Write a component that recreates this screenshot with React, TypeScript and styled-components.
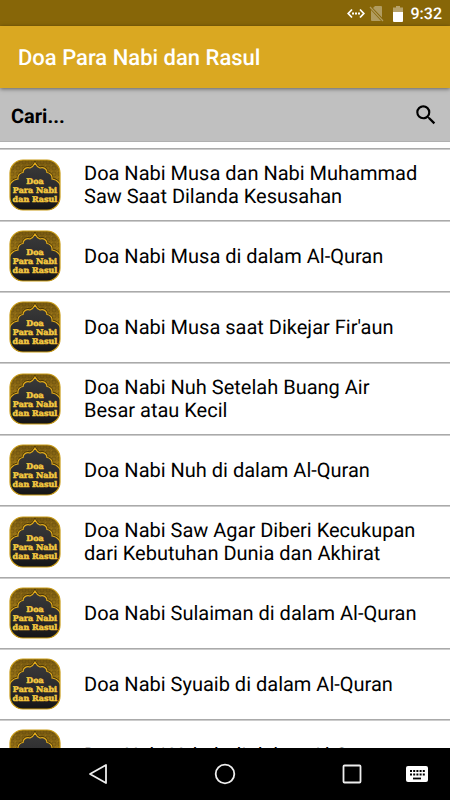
import React from "react";
import styled, { createGlobalStyle } from "styled-components";

const GlobalStyle = createGlobalStyle`
  * { box-sizing: border-box; }
  body {
    margin: 0;
    background: #fff;
    color: #000;
    font-family: Roboto, sans-serif;
    text-rendering: geometricPrecision;
  }
`;

const Screen = styled.div`
  display: flex;
  flex-direction: column;
  height: 100vh;
  overflow: hidden;
`;

const StatusBar = styled.div`
  display: flex;
  flex: none;
  align-items: center;
  justify-content: flex-end;
  height: 26px;
  padding: 2px 8px 0 0;
  background: #876608;
  color: #fff;
`;

const StatusIcon = styled.svg<{ $gap: number }>`
  flex: none;
  margin-right: ${(p) => p.$gap}px;
`;

const Clock = styled.span`
  font-size: 16px;
  font-weight: 500;
  line-height: 20px;
`;

const Toolbar = styled.header`
  position: relative;
  display: flex;
  flex: none;
  align-items: center;
  height: 62px;
  padding: 3px 18px 0;
  background: #daa821;
  box-shadow: 0 1px 4px rgba(0, 0, 0, 0.5);
`;

const Title = styled.h1`
  margin: 0;
  color: #fff;
  font-size: 22px;
  font-weight: 500;
  line-height: 28px;
`;

const SearchBar = styled.form`
  display: flex;
  flex: none;
  align-items: center;
  height: 54px;
  padding: 0 11px;
  background: #c0c0c0;
  border-bottom: 1px solid #b0b0b0;
`;

const SearchInput = styled.input`
  flex: 1;
  min-width: 0;
  padding: 2px 0 0;
  border: 0;
  outline: 0;
  background: transparent;
  color: #000;
  font: 700 20px/28px Roboto, sans-serif;
  text-rendering: inherit;
  &::placeholder { color: #000; opacity: 1; }
`;

const IconButton = styled.button`
  display: flex;
  align-items: center;
  justify-content: center;
  padding: 0;
  border: 0;
  background: transparent;
  color: inherit;
`;

const List = styled.ul`
  flex: 1;
  min-height: 0;
  margin: 0;
  padding: 6px 0 0;
  overflow: hidden;
  list-style: none;
`;

const Row = styled.li`
  display: flex;
  align-items: center;
  min-height: 71px;
  padding-left: 9px;
  border-top: 1px solid #aaa;
  box-shadow: inset 0 1px #ccc;
`;

const RowText = styled.span`
  flex: 1;
  padding: 13px 32px 12px 23px;
  font-size: 20px;
  line-height: 23px;
`;

const NavBar = styled.nav`
  display: grid;
  flex: none;
  grid-template-columns: 1fr 64px 63px 64px 63px 64px 1fr;
  align-items: center;
  height: 52px;
  background: #000;
`;

const NavButton = styled(IconButton)<{ $column: number }>`
  grid-row: 1;
  grid-column: ${(p) => p.$column};
  height: 52px;
`;

const Badge = styled.svg`
  flex: none;
`;

const arch =
  "M0 31 A10 10 0 0 1 9 20 A5.5 5.5 0 0 1 14 13.500 A5 5 0 0 1 21 9 Q24 8 26 4 Q28 8 31 9 A5 5 0 0 1 38 13.500 A5.5 5.5 0 0 1 43 20 A10 10 0 0 1 52 31 V52 H0 Z";

function AppBadge({ id }: { id: number }) {
  const clip = `badge-${id}`;
  const gold = `gold-${id}`;
  const lace = `lace-${id}`;
  const dark = `dark-${id}`;
  return (
    <Badge width="52" height="52" viewBox="0 0 52 52" aria-hidden="true">
      <defs>
        <clipPath id={clip}>
          <rect x="1" y="1" width="50" height="50" rx="13" />
        </clipPath>
        <linearGradient id={gold} x1="0" y1="0" x2="0" y2="1">
          <stop offset="0" stopColor="#755710" />
          <stop offset="0.5" stopColor="#a57d18" />
        </linearGradient>
        <linearGradient id={dark} x1="0" y1="0" x2="0" y2="1">
          <stop offset="0" stopColor="#3a3a3a" />
          <stop offset="0.6" stopColor="#28282a" />
          <stop offset="1" stopColor="#131315" />
        </linearGradient>
        <pattern id={lace} width="6" height="6" patternUnits="userSpaceOnUse">
          <circle cx="3" cy="3" r="2" fill="none" stroke="#4c3907" strokeOpacity="0.4" strokeWidth="0.8" />
          <circle cx="0" cy="0" r="1" fill="#c29a2a" fillOpacity="0.3" />
        </pattern>
      </defs>
      <g clipPath={`url(#${clip})`}>
        <rect width="52" height="52" fill={`url(#${gold})`} />
        <rect width="52" height="30" fill={`url(#${lace})`} />
        <path d={arch} fill={`url(#${dark})`} stroke="#3c2c06" strokeWidth="2.400" />
        <path d={arch} fill={`url(#${dark})`} stroke="#e3ac1a" strokeWidth="1.2" />
      </g>
      <rect x="1" y="1" width="50" height="50" rx="13" fill="none" stroke="#c99b16" strokeWidth="1.2" />
      <g
        fontFamily="'DejaVu Serif', serif"
        fontWeight="700"
        fontSize="8"
        textAnchor="middle"
        fill="#f5d35a"
        stroke="#f0c030"
        strokeWidth="0.5"
      >
        <text x="26" y="25">Doa</text>
        <text x="26" y="34">Para Nabi</text>
        <text x="26" y="43">dan Rasul</text>
      </g>
    </Badge>
  );
}

const prayers = [
  "Doa Nabi Musa dan Nabi Muhammad Saw Saat Dilanda Kesusahan",
  "Doa Nabi Musa di dalam Al-Quran",
  "Doa Nabi Musa saat Dikejar Fir'aun",
  "Doa Nabi Nuh Setelah Buang Air Besar atau Kecil",
  "Doa Nabi Nuh di dalam Al-Quran",
  "Doa Nabi Saw Agar Diberi Kecukupan dari Kebutuhan Dunia dan Akhirat",
  "Doa Nabi Sulaiman di dalam Al-Quran",
  "Doa Nabi Syuaib di dalam Al-Quran",
  "Doa Nabi Yakub di dalam Al-Quran",
];

export default function App() {
  return (
    <>
      <GlobalStyle />
      <Screen>
        <StatusBar>
          <StatusIcon $gap={4} width="18" height="14" viewBox="0 0 18 14" aria-hidden="true">
            <path d="M5 2.500 L1.200 6.500 L5 10.500 M13 2.500 L16.800 6.500 L13 10.500" fill="none" stroke="#fff" strokeWidth="1.8" />
            <path d="M5 5.500h2v2H5z M8 5.500h2v2H8z M11 5.500h2v2h-2z" fill="#fff" />
          </StatusIcon>
          <StatusIcon $gap={9} width="15" height="16" viewBox="0 0 15 16" aria-hidden="true">
            <path d="M6 0 H12 Q13 0 13 1 V11.500 L4 2 Z M2 4 L12 15 H3 Q2 15 2 14 Z" fill="#b19c60" />
            <path d="M1 1 L14 15" stroke="#b19c60" strokeWidth="1.2" />
          </StatusIcon>
          <StatusIcon $gap={8} width="10" height="16" viewBox="0 0 10 16" aria-hidden="true">
            <path d="M3 0 H7 V1.500 H10 V6 H0 V1.500 H3 Z" fill="#b7a26b" />
            <path d="M0 6 H10 V15 Q10 16 9 16 H1 Q0 16 0 15 Z" fill="#fff" />
          </StatusIcon>
          <Clock>9:32</Clock>
        </StatusBar>
        <Toolbar>
          <Title>Doa Para Nabi dan Rasul</Title>
        </Toolbar>
        <SearchBar role="search" onSubmit={(e) => e.preventDefault()}>
          <SearchInput type="text" placeholder="Cari..." aria-label="Cari" />
          <IconButton type="submit" aria-label="Cari">
            <svg width="26" height="26" viewBox="0 0 24 24" fill="currentColor">
              <path d="M15.500 14h-.79l-.28-.27A6.471 6.471 0 0 0 16 9.500 6.500 6.500 0 1 0 9.500 16c1.610 0 3.090-.59 4.230-1.570l.27.28v.79l5 4.990L20.490 19l-4.990-5zm-6 0C7.010 14 5 11.990 5 9.500S7.010 5 9.500 5 14 7.010 14 9.500 11.990 14 9.500 14z" />
            </svg>
          </IconButton>
        </SearchBar>
        <List>
          {prayers.map((text, i) => (
            <Row key={text}>
              <AppBadge id={i} />
              <RowText>{text}</RowText>
            </Row>
          ))}
        </List>
        <NavBar>
          <NavButton $column={2} aria-label="Kembali">
            <svg width="22" height="22" viewBox="0 0 22 22" fill="none" stroke="#eee" strokeWidth="1.8" strokeLinejoin="round">
              <path d="M19 2 V20 L3 11 Z" />
            </svg>
          </NavButton>
          <NavButton $column={4} aria-label="Beranda">
            <svg width="22" height="22" viewBox="0 0 22 22" fill="none" stroke="#eee" strokeWidth="1.8">
              <circle cx="11" cy="11" r="9.300" />
            </svg>
          </NavButton>
          <NavButton $column={6} aria-label="Terbaru">
            <svg width="22" height="22" viewBox="0 0 22 22" fill="none" stroke="#eee" strokeWidth="1.8">
              <rect x="2.500" y="2.500" width="17" height="17" rx="1" />
            </svg>
          </NavButton>
          <NavButton $column={7} aria-label="Papan ketik">
            <svg width="22" height="16" viewBox="0 0 22 16">
              <rect width="22" height="16" rx="2" fill="#fff" />
              <path d="M4 5h15M4 8.500h15" stroke="#000" strokeWidth="2" strokeDasharray="2 1.200" />
              <path d="M7 12.500h8" stroke="#000" strokeWidth="1.8" />
            </svg>
          </NavButton>
        </NavBar>
      </Screen>
    </>
  );
}
